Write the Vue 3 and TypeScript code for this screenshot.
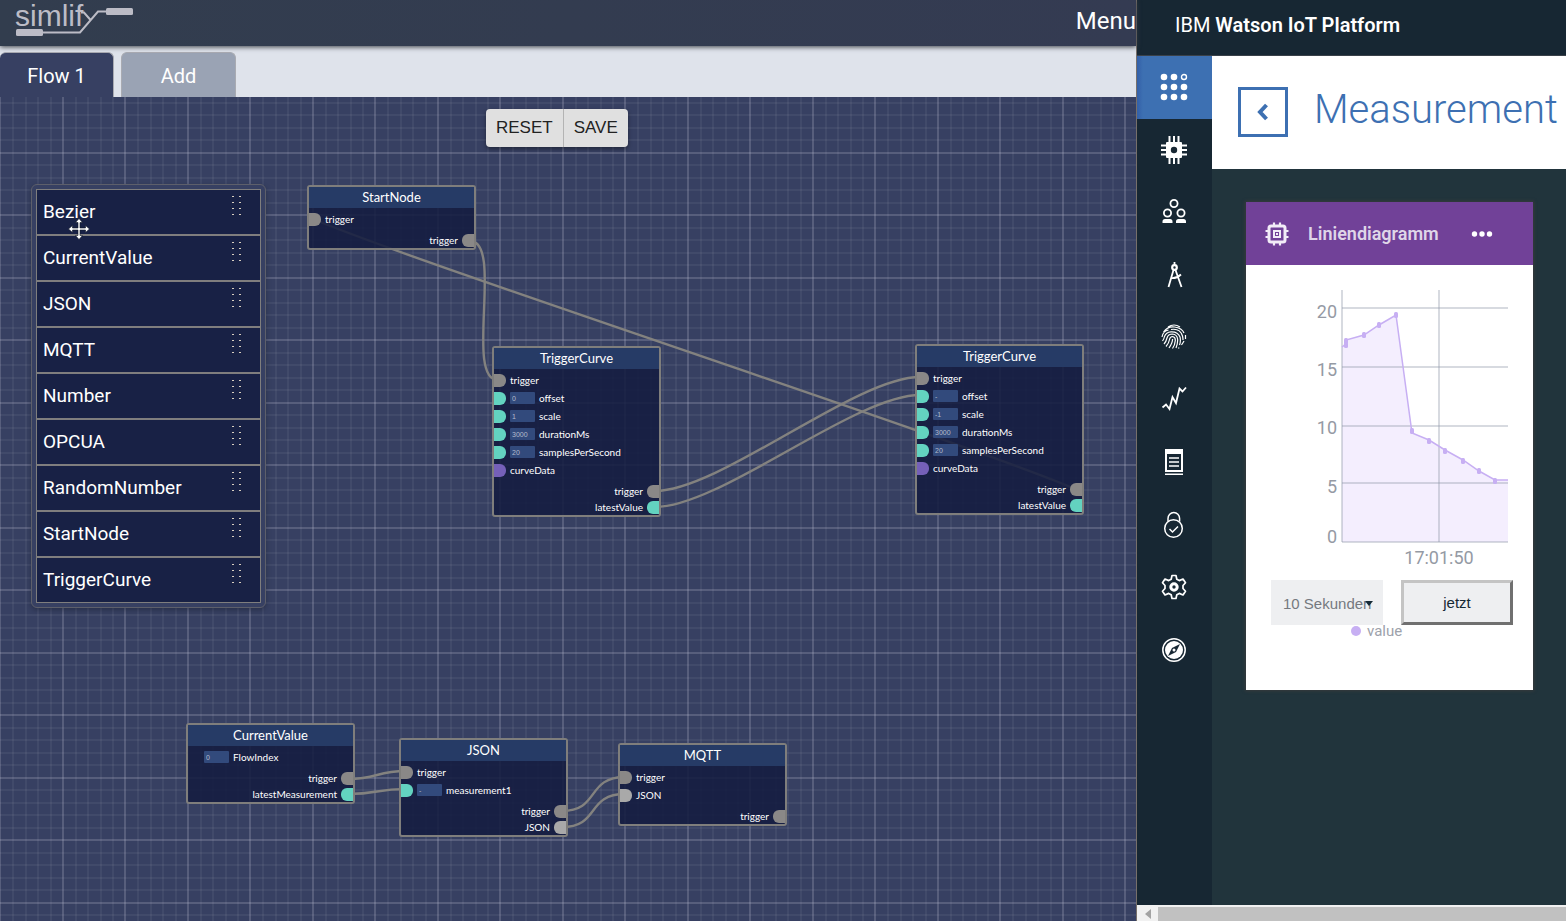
<script setup lang="ts">
import { ref } from 'vue'

type PortKind = 'flow' | 'number' | 'curve' | 'json' | 'none'

interface InputPort {
  label: string
  kind: PortKind
  value?: string
}

interface OutputPort {
  label: string
  kind: PortKind
}

interface FlowNode {
  id: string
  title: string
  x: number
  y: number
  inputs: InputPort[]
  outputs: OutputPort[]
}

const palette: string[] = [
  'Bezier',
  'CurrentValue',
  'JSON',
  'MQTT',
  'Number',
  'OPCUA',
  'RandomNumber',
  'StartNode',
  'TriggerCurve',
]

const curveInputs = (offset: string, scale: string): InputPort[] => [
  { label: 'trigger', kind: 'flow' },
  { label: 'offset', kind: 'number', value: offset },
  { label: 'scale', kind: 'number', value: scale },
  { label: 'durationMs', kind: 'number', value: '3000' },
  { label: 'samplesPerSecond', kind: 'number', value: '20' },
  { label: 'curveData', kind: 'curve' },
]

const curveOutputs: OutputPort[] = [
  { label: 'trigger', kind: 'flow' },
  { label: 'latestValue', kind: 'number' },
]

const nodes = ref<FlowNode[]>([
  {
    id: 'start',
    title: 'StartNode',
    x: 307,
    y: 88,
    inputs: [{ label: 'trigger', kind: 'flow' }],
    outputs: [{ label: 'trigger', kind: 'flow' }],
  },
  { id: 'curve-a', title: 'TriggerCurve', x: 492, y: 249, inputs: curveInputs('0', '1'), outputs: curveOutputs },
  { id: 'curve-b', title: 'TriggerCurve', x: 915, y: 247, inputs: curveInputs('-', '-1'), outputs: curveOutputs },
  {
    id: 'current',
    title: 'CurrentValue',
    x: 186,
    y: 626,
    inputs: [{ label: 'FlowIndex', kind: 'none', value: '0' }],
    outputs: [
      { label: 'trigger', kind: 'flow' },
      { label: 'latestMeasurement', kind: 'number' },
    ],
  },
  {
    id: 'json',
    title: 'JSON',
    x: 399,
    y: 641,
    inputs: [
      { label: 'trigger', kind: 'flow' },
      { label: 'measurement1', kind: 'number', value: '-' },
    ],
    outputs: [
      { label: 'trigger', kind: 'flow' },
      { label: 'JSON', kind: 'json' },
    ],
  },
  {
    id: 'mqtt',
    title: 'MQTT',
    x: 618,
    y: 646,
    inputs: [
      { label: 'trigger', kind: 'flow' },
      { label: 'JSON', kind: 'json' },
    ],
    outputs: [{ label: 'trigger', kind: 'flow' }],
  },
])

const wires: string[] = [
  'M470 144 C504 144 464 283 498 283',
  'M313 122 C430 171 960 343 1075 392',
  'M655 394 C720 394 855 280 920 280',
  'M655 410 C720 410 855 298 920 298',
  'M348 682 C378 682 376 674 406 674',
  'M348 697 C378 697 376 692 406 692',
  'M562 714 C600 714 586 680 625 680',
  'M562 730 C600 730 586 697 625 697',
]

const gridMinor: number[] = [12, 25, 37, 50, 75, 87, 100, 112]

const navItems: string[] = [
  'Boards',
  'Devices',
  'Members',
  'Apps',
  'Access',
  'Usage',
  'Rules',
  'Security',
  'Settings',
  'Extensions',
]

const yTicks = [
  { text: '20', y: 44, line: 43 },
  { text: '15', y: 102, line: 102 },
  { text: '10', y: 160, line: 161 },
  { text: '5', y: 219, line: 218 },
  { text: '0', y: 269, line: 277 },
]

const samples: [number, number][] = [
  [100, 79],
  [100, 75],
  [118, 69],
  [133, 59],
  [150, 49],
  [166, 165],
  [183, 175],
  [199, 185],
  [217, 195],
  [233, 205],
  [249, 215],
]

const range = ref('10 Sekunden')
</script>

<template>
  <div class="desktop">
    <section class="simlify">
      <header class="topbar">
        <svg class="logo" width="122" height="40" viewBox="0 0 122 40" role="img" aria-label="simlify">
          <text x="0" y="26" class="logo-text">simlif</text>
          <path d="M27 32.5H65L83 11.500H91M66 12.500H69L76 20.500" fill="none" stroke="#bcbcc6" stroke-width="2" />
          <rect x="1" y="29" width="27" height="7" rx="1.500" fill="#bcbcc6" />
          <rect x="91" y="8" width="27" height="7" rx="1.500" fill="#bcbcc6" />
        </svg>
        <button class="menu" type="button">Menu</button>
      </header>

      <nav class="tabs">
        <button class="tab active" type="button">Flow 1</button>
        <button class="tab" type="button">Add</button>
      </nav>

      <main class="canvas">
        <svg class="wires" width="100%" height="100%">
          <defs>
            <pattern id="grid" width="125" height="125" y="55" patternUnits="userSpaceOnUse">
              <g fill="#ffffff" fill-opacity="0.05">
                <rect v-for="p in gridMinor" :key="'v' + p" :x="p" y="0" width="2" height="125" />
                <rect v-for="p in gridMinor" :key="'h' + p" x="0" :y="p" width="125" height="2" />
              </g>
              <g fill="#c8c8dc" fill-opacity="0.22">
                <rect x="0" y="0" width="1" height="125" />
                <rect x="124" y="0" width="1" height="125" />
                <rect x="62" y="0" width="2" height="125" />
                <rect x="0" y="0" width="125" height="2" />
                <rect x="0" y="62" width="125" height="2" />
              </g>
            </pattern>
          </defs>
          <rect width="100%" height="100%" fill="url(#grid)" />
          <path v-for="d in wires" :key="d" :d="d" class="wire" />
        </svg>

        <div class="toolbar">
          <button type="button">RESET</button>
          <button type="button">SAVE</button>
        </div>

        <ul class="palette">
          <li v-for="name in palette" :key="name">
            <span>{{ name }}</span>
            <svg width="10" height="20" viewBox="0 0 10 20" aria-hidden="true">
              <g fill="#d8cfc0">
                <rect v-for="i in 4" :key="'l' + i" x="0" :y="i * 6 - 6" width="2" height="1" />
                <rect v-for="i in 4" :key="'r' + i" x="7" :y="i * 6 - 6" width="2" height="1" />
              </g>
            </svg>
          </li>
        </ul>

        <article
          v-for="node in nodes"
          :key="node.id"
          class="node"
          :style="{ left: node.x + 'px', top: node.y + 'px' }"
        >
          <h2>{{ node.title }}</h2>
          <div class="inputs">
            <label v-for="port in node.inputs" :key="port.label" class="row">
              <i class="port" :class="port.kind"></i>
              <input v-if="port.value !== undefined" v-model="port.value" type="text" />
              <span>{{ port.label }}</span>
            </label>
          </div>
          <div class="outputs">
            <div v-for="port in node.outputs" :key="port.label" class="row out">
              <span>{{ port.label }}</span>
              <i class="port" :class="port.kind"></i>
            </div>
          </div>
        </article>

        <svg class="cursor" width="22" height="22" viewBox="0 0 22 22" aria-hidden="true">
          <path
            d="M11 0.500L14.500 4.500H12V10H17.500V7.500L21.500 11L17.500 14.500V12H12V17.500H14.500L11 21.500L7.500 17.500H10V12H4.500V14.500L0.500 11L4.500 7.500V10H10V4.500H7.500Z"
            fill="#fff"
            stroke="#111827"
            stroke-width="0.600"
          />
        </svg>
      </main>
    </section>

    <aside class="watson">
      <header class="brand"><span>IBM <b>Watson IoT Platform</b></span></header>
      <div class="platform">
        <nav class="rail">
          <a v-for="(item, i) in navItems" :key="item" href="#" :class="{ current: i === 0 }" :aria-label="item">
            <svg v-if="i === 0" width="28" height="28" viewBox="0 0 28 28" fill="#fff">
              <circle cx="4" cy="4" r="3.300" /><circle cx="14" cy="4" r="3.300" />
              <circle cx="24" cy="4" r="2.500" fill="none" stroke="#fff" stroke-width="1.400" />
              <circle cx="4" cy="14" r="3.300" /><circle cx="14" cy="14" r="3.300" /><circle cx="24" cy="14" r="3.300" />
              <circle cx="4" cy="24" r="3.300" /><circle cx="14" cy="24" r="3.300" /><circle cx="24" cy="24" r="3.300" />
            </svg>
            <svg v-else-if="i === 1" width="28" height="28" viewBox="0 0 28 28">
              <path
                d="M9.500 0V28M14 0V28M18.500 0V28M1 9.500H27M1 14H27M1 18.500H27"
                stroke="#fff"
                stroke-width="2"
              />
              <rect x="6" y="6" width="16" height="16" rx="1" fill="#fff" />
              <circle cx="14" cy="14" r="3.200" fill="#172733" />
            </svg>
            <svg v-else-if="i === 2" width="28" height="28" viewBox="0 0 28 28" fill="none" stroke="#fff" stroke-width="1.800">
              <circle cx="14" cy="5.500" r="3.600" /><circle cx="7.500" cy="15" r="3.600" /><circle cx="21" cy="15" r="3.600" />
              <path d="M2.500 25V23.500Q2.500 21 5 21H10Q12.500 21 12.500 23.500V25ZM16 25V23.500Q16 21 18.500 21H23.500Q26 21 26 23.500V25Z" fill="#fff" stroke="none" />
            </svg>
            <svg v-else-if="i === 3" width="28" height="28" viewBox="0 0 28 28" fill="none" stroke="#fff" stroke-width="1.800">
              <path d="M14.500 1V4M13.500 9L8.500 26M15.500 9L21.500 26M10.500 17Q16 18 21 13.500" />
              <circle cx="14.500" cy="6.500" r="2.300" stroke-width="2.200" />
            </svg>
            <svg v-else-if="i === 4" width="28" height="28" viewBox="0 0 28 28" fill="none" stroke="#fff" stroke-width="1.200">
              <path
                d="M8 4Q14 0 20 4M3.500 9Q8 3 14.500 4Q22 5 24 10M2 14Q3 8 8.500 7M11 6.500Q20 5 22.500 13Q23 15 23 17M25.500 12V16M2.500 18Q4 16 4.500 13.500Q6 9 11 8.800Q18 8.500 20 14Q21 18 19.500 22M4 21Q6 19 7 15Q8 11 12.500 11Q17 11.500 17.600 16Q18 20 16 25M6 23.500Q9 20 9.500 16.500Q10 13.500 12.500 13.500Q15.500 14 15.300 17.500Q15 22 12.500 25.500M9 25Q12.500 20 12.600 16M21.500 22Q23.500 19 24 18M19 24.500L18.500 25.500"
              />
            </svg>
            <svg v-else-if="i === 5" width="28" height="28" viewBox="0 0 28 28" fill="none" stroke="#fff" stroke-width="1.800">
              <path d="M2.500 21.500L6 18.500L9.500 23L12.500 11L16 17L19.500 2.500L22.500 5.500L26 1.500" />
            </svg>
            <svg v-else-if="i === 6" width="28" height="28" viewBox="0 0 28 28" fill="#fff">
              <path d="M5 1H23V24H5ZM7 6V22H21V6Z" fill-rule="evenodd" />
              <rect x="5" y="25.500" width="18" height="1.500" />
              <path d="M9 10H19M9 14H19M9 18H19" stroke="#fff" stroke-width="1.300" />
            </svg>
            <svg v-else-if="i === 7" width="28" height="28" viewBox="0 0 28 28" fill="none" stroke="#fff" stroke-width="1.500">
              <path d="M8 10.500V7.500A5.800 6 0 0 1 19.600 7.500V10.500" />
              <circle cx="13.500" cy="17.500" r="8.800" />
              <path d="M9.500 18L12.500 21L18 15.500" />
            </svg>
            <svg v-else-if="i === 8" width="28" height="28" viewBox="0 0 28 28" fill="none" stroke="#fff" stroke-width="1.700" stroke-linejoin="round">
              <path
                d="M12 2.500H16L16.800 6.200L19.300 7.600L23 6L25.500 9.700L23 12.500V15.500L25.500 18.300L23 22L19.300 20.400L16.800 21.800L16 25.500H12L11.200 21.800L8.700 20.400L5 22L2.500 18.300L5 15.500V12.500L2.500 9.700L5 6L8.700 7.600L11.200 6.200Z"
              />
              <circle cx="14" cy="14" r="3.200" stroke-width="3" />
            </svg>
            <svg v-else width="28" height="28" viewBox="0 0 28 28">
              <circle cx="14" cy="14" r="11.200" fill="none" stroke="#fff" stroke-width="1.500" />
              <circle cx="14" cy="14" r="9" fill="#fff" />
              <path d="M20 8L16 16L8 20L12 12Z" fill="#172733" />
              <circle cx="14" cy="14" r="1.500" fill="#fff" />
            </svg>
          </a>
        </nav>

        <div class="content">
          <div class="titlebar">
            <button class="back" type="button" aria-label="Back">
              <svg width="14" height="18" viewBox="0 0 14 18">
                <path d="M10.500 2L4 9L10.500 16" fill="none" stroke="#3d70b2" stroke-width="4" />
              </svg>
            </button>
            <h1>Measurement</h1>
          </div>

          <article class="card">
            <header>
              <svg width="24" height="24" viewBox="0 0 24 24" fill="none" stroke="#f2ecf7">
                <path d="M9 0.500V4M15 0.500V4M9 20V23.500M15 20V23.500M0.500 9H4M0.500 15H4M20 9H23.500M20 15H23.500" stroke-width="2.200" />
                <rect x="4" y="4" width="16" height="16" rx="2" stroke-width="3" />
                <rect x="9" y="9" width="6" height="6" stroke-width="2" />
                <rect x="11" y="11" width="2" height="2" stroke="none" fill="#f2ecf7" />
              </svg>
              <h3>Liniendiagramm</h3>
              <button type="button" aria-label="More">
                <svg width="22" height="8" viewBox="0 0 22 8" fill="#fff">
                  <circle cx="3.500" cy="4" r="2.700" /><circle cx="11" cy="4" r="2.700" /><circle cx="18.500" cy="4" r="2.700" />
                </svg>
              </button>
            </header>
            <svg class="chart" viewBox="0 0 287 310" role="img" aria-label="value">
              <path
                d="M96 82L100 75L118 69L133 59L150 50L166 168L183 175L199 185L217 195L233 206L249 215H262V277H96Z"
                fill="#f4eefe"
              />
              <g stroke="#8c96a5" stroke-opacity="0.350" stroke-width="2">
                <path v-for="t in yTicks" :key="t.text" :d="`M96 ${t.line}H262`" />
                <path d="M96 25V277M193 25V277" />
              </g>
              <path
                d="M96 82L100 79V75L118 70L133 60L150 50L166 168L183 175L199 185L217 195L233 206L249 215H262"
                fill="none"
                stroke="#c7aff3"
                stroke-width="1.500"
              />
              <rect
                v-for="([x, y], i) in samples"
                :key="i"
                :x="x - 2"
                :y="y - 2"
                width="4"
                height="6"
                rx="1.500"
                fill="#c7aff3"
              />
              <text v-for="t in yTicks" :key="'l' + t.text" x="91" :y="t.y + 9" text-anchor="end">{{ t.text }}</text>
              <text x="193" y="299" text-anchor="middle">17:01:50</text>
            </svg>
            <div class="controls">
              <div class="picker">
                <select v-model="range" aria-label="Zeitraum">
                  <option>10 Sekunden</option>
                </select>
                <svg width="8" height="5" viewBox="0 0 8 5" aria-hidden="true"><path d="M0 0H8L4 5Z" fill="#152935" /></svg>
              </div>
              <button type="button">jetzt</button>
            </div>
            <p class="legend"><i></i>value</p>
          </article>
        </div>
      </div>
      <div class="scrollbar">
        <button type="button" aria-label="Scroll left">
          <svg width="6" height="10" viewBox="0 0 6 10"><path d="M6 0V10L0 5Z" fill="#a3a3a3" /></svg>
        </button>
        <div class="thumb"></div>
      </div>
    </aside>
  </div>
</template>

<style>
body {
  margin: 0;
}
</style>

<style scoped>
* {
  box-sizing: border-box;
}

button {
  font: inherit;
  color: inherit;
  border: 0;
  padding: 0;
  background: none;
}

.desktop {
  display: flex;
  height: 100vh;
  overflow: hidden;
  font-family: Roboto, "Liberation Sans", sans-serif;
}

.simlify {
  flex: 1;
  min-width: 0;
  display: flex;
  flex-direction: column;
  background: #dfe3eb;
  color: #fff;
}

.topbar {
  position: relative;
  display: flex;
  justify-content: space-between;
  height: 46px;
  padding-left: 15px;
  background: linear-gradient(90deg, #323d4e, #343b52);
  box-shadow: 0 1px 5px #3c3f46;
}

.logo-text {
  font: 30px "Liberation Sans", sans-serif;
  fill: #bcbcc6;
}

.menu {
  height: 42px;
  font-size: 24px;
}

.tabs {
  display: flex;
  gap: 7px;
  padding-top: 6px;
}

.tab {
  width: 115px;
  height: 45px;
  padding-top: 2px;
  font-size: 20px;
  background: #9aa3b4;
  border: 1px solid #a9abb2;
  border-bottom: 0;
  border-radius: 6px 6px 0 0;
}

.tab.active {
  width: 114px;
  border-left: 0;
  background: #374062;
}

.canvas {
  position: relative;
  flex: 1;
  overflow: hidden;
  background: #374062;
}

.wires {
  display: block;
}

.wire {
  fill: none;
  stroke: #83827f;
  stroke-width: 2.4px;
}

.toolbar {
  position: absolute;
  left: 486px;
  top: 12px;
  display: flex;
  border-radius: 4px;
  background: #e0e0e0;
  box-shadow: 0 2px 4px rgba(0, 0, 0, 0.4);
  color: #222;
  font-family: "Liberation Sans", sans-serif;
  font-size: 17px;
}

.toolbar button {
  height: 38px;
  padding: 0 10px;
}

.toolbar button + button {
  border-left: 1px solid #b4b4b4;
}

.palette {
  position: absolute;
  left: 31px;
  top: 87px;
  width: 235px;
  margin: 0;
  padding: 4px;
  list-style: none;
  border: 1px solid #5d5f6b;
  border-radius: 6px;
  background: #374062;
  box-shadow: 0 2px 5px rgba(20, 24, 40, 0.4);
}

.palette li {
  display: flex;
  justify-content: space-between;
  height: 46px;
  padding: 0 18px 0 6px;
  border: 1px solid #7f7e7e;
  background: #182145;
  font-size: 19px;
  line-height: 44px;
}

.palette svg {
  margin-top: 6px;
}

.node {
  position: absolute;
  width: 169px;
  border: 2px solid #7f7e7c;
  border-radius: 3px;
  background: rgba(19, 28, 63, 0.87);
  font-family: Lato, "Liberation Sans", sans-serif;
}

.node h2 {
  margin: 0 0 2px;
  height: 21px;
  line-height: 21px;
  text-align: center;
  font-size: 13px;
  font-weight: 400;
  background: #263b66;
}

.row {
  display: flex;
  align-items: center;
  gap: 4px;
  height: 18px;
  font-size: 10px;
}

.outputs {
  margin-top: 4px;
}

.row.out {
  height: 16px;
  justify-content: flex-end;
}

.port {
  width: 12px;
  height: 13px;
  border-radius: 0 6px 6px 0;
}

.out .port {
  border-radius: 6px 0 0 6px;
}

.flow {
  background: #8a8887;
}

.number {
  background: #63d3c0;
}

.curve {
  background: #7560b8;
}

.json {
  background: #a9a9a9;
}

.row input {
  width: 25px;
  height: 12px;
  padding: 0 2px;
  border: 0;
  border-radius: 1px;
  background: #324a7c;
  color: #b4bccd;
  font: 7px "Liberation Sans", sans-serif;
}

.cursor {
  position: absolute;
  left: 68px;
  top: 121px;
}

.watson {
  flex: 0 0 430px;
  display: flex;
  flex-direction: column;
  overflow: hidden;
  border-left: 1px solid #77706b;
  background: #172733;
}

.brand {
  flex: none;
  height: 56px;
  padding-left: 38px;
  border-bottom: 1px solid #3a4149;
  color: #fff;
  font-size: 20px;
  line-height: 50px;
}

.brand b {
  font-weight: 600;
}

.platform {
  flex: 1;
  display: flex;
  min-height: 0;
}

.rail {
  flex: none;
  display: flex;
  flex-direction: column;
  width: 75px;
  height: 625px;
}

.rail a {
  flex: 1;
  display: flex;
  align-items: center;
  justify-content: center;
  padding-right: 2px;
}

.rail a.current {
  background: linear-gradient(90deg, #335fa8, #3d70b2 6px);
}

.content {
  flex: 1;
  min-width: 0;
  background: #21343c;
}

.titlebar {
  display: flex;
  align-items: center;
  gap: 26px;
  height: 113px;
  padding: 0 0 2px 26px;
  background: #fff;
}

.back {
  flex: none;
  display: flex;
  align-items: center;
  justify-content: center;
  width: 50px;
  height: 50px;
  border: 3px solid #3d70b2;
}

h1 {
  margin: 0;
  padding-bottom: 4px;
  color: #3d70b2;
  font-size: 40px;
  font-weight: 300;
}

.card {
  height: 488px;
  margin: 33px 33px 0 34px;
  background: #fff;
  box-shadow: 0 0 3px 1px #383b3c;
}

.card header {
  display: flex;
  align-items: center;
  height: 63px;
  padding-left: 19px;
  background: #714198;
}

.card h3 {
  margin: 0 32px 0 19px;
  color: #dfd6e8;
  font-size: 18px;
  font-weight: 600;
}

.card header button {
  display: flex;
}

.chart {
  display: block;
  width: 100%;
}

.chart text {
  fill: #959aa4;
  font-size: 18px;
}

.controls {
  display: grid;
  grid-template-columns: 1fr 1fr;
  gap: 18px;
  margin-top: 5px;
  padding: 0 20px 0 25px;
}

.controls > * {
  min-width: 0;
  height: 45px;
  background: #eeeff1;
  font: 15px "Liberation Sans", sans-serif;
}

.controls > button {
  border: 3px outset #c4c4c4;
  color: #152935;
}

.picker {
  position: relative;
}

.picker select {
  width: 100%;
  height: 100%;
  padding: 2px 10px 0 12px;
  border: 0;
  appearance: none;
  background: none;
  color: #75797f;
  font: inherit;
}

.picker svg {
  position: absolute;
  right: 10px;
  top: 21px;
}

.legend {
  display: flex;
  align-items: center;
  gap: 6px;
  margin: 0;
  padding-left: 105px;
  height: 12px;
  color: #9da2ab;
  font-size: 15px;
}

.legend i {
  width: 10px;
  height: 10px;
  border-radius: 5px;
  background: #c7aff3;
}

.scrollbar {
  flex: none;
  display: flex;
  height: 16px;
  padding-top: 2px;
  background: #f1f1f1;
}

.scrollbar button {
  width: 21px;
  display: flex;
  align-items: center;
  justify-content: center;
}

.thumb {
  flex: 1;
  background: #c1c1c1;
}
</style>
